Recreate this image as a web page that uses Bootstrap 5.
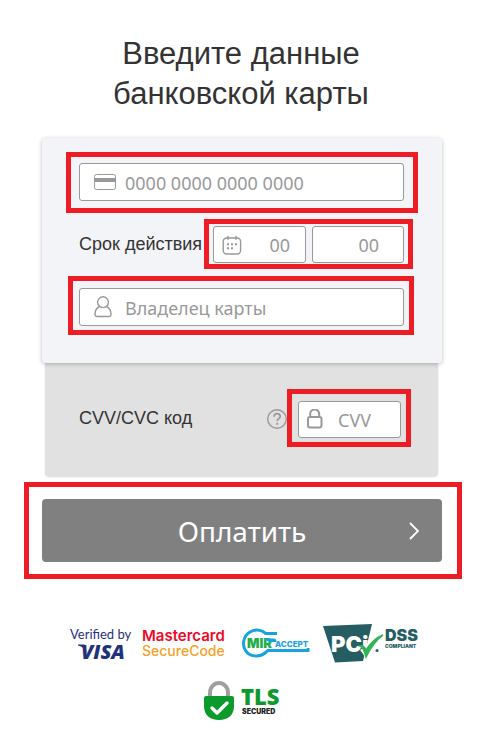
<!DOCTYPE html>
<html lang="ru">
<head>
<meta charset="utf-8">
<meta name="viewport" content="width=device-width, initial-scale=1">
<title>Оплата картой</title>
<link href="https://cdn.jsdelivr.net/npm/bootstrap@5.3.0/dist/css/bootstrap.min.css" rel="stylesheet">
<style>
body { font-family: "Liberation Sans", Arial, sans-serif; color: #333; background: #fff; }
.page { max-width: 520px; padding: 34px 29px 8px 24px; }
.page-title { font-size: 31px; line-height: 40px; margin-bottom: 24px; padding-right: 4px; }
.front { background: #f3f4f7; border-radius: 4px; box-shadow: 0 1px 4px rgba(0,0,0,.25); margin: 0 20px 0 18px; padding: 14px 24px 28px; }
.back { background: #e1e1e1; border-radius: 0 0 4px 4px; box-shadow: 0 1px 2px rgba(0,0,0,.15); margin: 0 24px 0 21px; padding: 26px 27px 29px 34px; }
.frame { border: 5px solid #ee1c25; }
.frame-number { padding: 6px 9px 7px 8px; margin-bottom: 6px; }
.frame-date { padding: 2px 4px 1px; gap: 6px; margin-right: 5px; }
.frame-owner { padding: 7px 5px 4px 6px; margin: 7px 4px 0 2px; }
.frame-cvv { padding: 7px 5px 4px 6px; }
.frame-pay { padding: 12px 15px 12px 13px; margin-top: 6px; }
.field { background: #fff; border: 1px solid #999; border-radius: 3px; height: 38px; }
.field-short { height: 37px; }
.field-wide { padding-left: 14px; }
.field input { font: 18px/24px "Noto Sans", "Open Sans", sans-serif; color: #555; background: none; border: 0; outline: 0; padding: 2px 0 0; min-width: 0; }
.field input::placeholder { color: #999; opacity: 1; }
.field:focus-within { border-color: #555; }
.field-wide input { padding-left: 8px; }
.field-short input { padding-top: 0; }
.field-month { width: 93px; padding: 0 15px 0 8px; }
.field-year { width: 92px; padding: 0 24px 0 8px; }
.field-cvv { width: 103px; padding-left: 7px; }
.field-cvv input { padding-left: 14px; }
.field-label { font-size: 18px; line-height: 24px; }
.date-label { padding-left: 13px; }
.help { color: #999; line-height: 0; }
.pay { background: #808080; color: #fff; border-radius: 4px; height: 63px; padding: 0 22px 0 34px; font: 28px/40px "Noto Sans", "Open Sans", sans-serif; }
.pay:hover { background: #707070; color: #fff; }
.logos { margin-top: 43px; padding-left: 44px; gap: 8px; }
.tls { margin-top: 14px; }
svg { flex: none; display: block; }
.face-wide { font-family: "Inter", sans-serif; }
.face-plain { font-family: "Open Sans", sans-serif; }
</style>
<script src="https://cdn.jsdelivr.net/npm/bootstrap@5.3.0/dist/js/bootstrap.bundle.min.js"></script>
</head>
<body>
<main class="page mx-auto">
  <h1 class="page-title fw-normal text-center">Введите данные<br>банковской карты</h1>
  <form>
    <section class="front position-relative">
      <div class="frame frame-number">
        <div class="field field-wide d-flex align-items-center">
          <svg width="23" height="16" viewBox="0 0 23 16" aria-hidden="true"><rect x=".5" y=".5" width="21" height="15" rx="2" fill="none" stroke="#999"/><rect x="1" y="4" width="20" height="4" fill="#999"/></svg>
          <input class="flex-grow-1" type="text" inputmode="numeric" placeholder="0000 0000 0000 0000" aria-label="Номер карты">
        </div>
      </div>
      <div class="d-flex align-items-center justify-content-between">
        <label class="field-label date-label" for="month">Срок действия</label>
        <div class="frame frame-date d-flex">
          <div class="field field-short field-month d-flex align-items-center">
            <svg width="20" height="20" viewBox="0 0 20 20" fill="none" stroke="#999" stroke-width="1.4" aria-hidden="true"><rect x="1.2" y="3" width="17.4" height="16" rx="3.5"/><path d="M6 .8v4M14 .8v4"/><path d="M5 9.3h2M9 9.3h2M13 9.3h2M5 13.3h2M9 13.3h2" stroke-width="2"/></svg>
            <input class="flex-grow-1 w-100 text-end" id="month" type="text" inputmode="numeric" placeholder="00">
          </div>
          <div class="field field-short field-year d-flex align-items-center">
            <input class="w-100 text-end" type="text" inputmode="numeric" placeholder="00" aria-label="Год">
          </div>
        </div>
      </div>
      <div class="frame frame-owner">
        <div class="field field-wide d-flex align-items-center">
          <svg width="23" height="22" viewBox="0 0 23 22" fill="none" stroke="#999" stroke-width="1.4" aria-hidden="true"><circle cx="9" cy="6.2" r="5.4"/><path d="M5.500 10.500C2.500 12 1 15 1 18.200c0 1.400 1 2.300 2.300 2.300h11.400c1.300 0 2.300-.9 2.300-2.300 0-3.200-1.500-6.200-4.500-7.700"/></svg>
          <input class="flex-grow-1" type="text" placeholder="Владелец карты" aria-label="Владелец карты">
        </div>
      </div>
    </section>
    <section class="back d-flex align-items-center">
      <label class="field-label me-auto" for="cvv">CVV/CVC код</label>
      <button class="help btn p-0 border-0" type="button" aria-label="Что такое CVV">
        <svg width="20" height="22" viewBox="0 0 20 22" fill="none" stroke="#999" stroke-width="1.4"><circle cx="10" cy="12" r="9.300"/><path d="M7 9.800c0-4.300 6.200-3.900 6.200-.4 0 2.200-3 2.300-3 4.700M10.200 15.700v2" stroke-width="1.700"/></svg>
      </button>
      <div class="frame frame-cvv">
        <div class="field field-short field-cvv d-flex align-items-center">
          <svg width="18" height="22" viewBox="0 0 18 22" fill="none" stroke="#999" stroke-width="2" aria-hidden="true"><rect x="2" y="8" width="13.500" height="10.500" rx="2"/><path d="M4.200 8V5a4.500 4.500 0 0 1 9 0v3"/></svg>
          <input class="flex-grow-1 w-100" id="cvv" type="text" inputmode="numeric" placeholder="CVV">
        </div>
      </div>
    </section>
    <div class="frame frame-pay">
      <button class="pay btn border-0 w-100 d-flex align-items-center" type="submit">
        <span class="flex-grow-1 text-center">Оплатить</span>
        <svg width="12" height="18" viewBox="0 0 12 18" fill="none" stroke="#fff" stroke-width="1.800" aria-hidden="true"><path d="M2 1l8 8-8 8"/></svg>
      </button>
    </div>
  </form>
  <div class="logos d-flex">
    <svg width="66" height="42" viewBox="0 0 66 42" role="img" aria-label="Verified by VISA" fill="#1f327e">
      <text x="2" y="17" font-family="Lato" font-size="13">Verified by</text>
      <text class="face-plain" x="13" y="37" font-size="20" font-weight="800" font-style="italic">VISA</text>
      <path d="M10 22.500h6.500l2.500 9c-1.500-4-4.500-7-9-8z"/>
    </svg>
    <svg class="face-wide" width="86" height="42" viewBox="0 0 86 42" role="img" aria-label="Mastercard SecureCode">
      <text x="0" y="19" font-size="15" fill="#eb0a29" font-weight="600">Mastercard</text>
      <text x="0" y="34" font-size="14" fill="#f4a12a" font-weight="500">SecureCode</text>
    </svg>
    <svg width="76" height="42" viewBox="0 0 76 42" role="img" aria-label="MIR Accept">
      <path d="M41 11.500H29.500C26 7.500 19 7 14 10 7 14 6 23 9.500 28.500c4 6.500 14 7 19.500 2.500l3-2.500h40V26" fill="none" stroke="#17a3e0" stroke-width="3"/>
      <text class="face-wide" x="11" y="26" font-size="13" font-weight="900" fill="#22ad4a">MIR</text>
      <path d="M29 16.500h9q2.500 0 2.500 3.500h-5.500q-4 0-6-3.500z" fill="#17a3e0"/>
      <text class="face-wide" x="39" y="25" font-size="8" font-weight="800" fill="#17a3e0">ACCEPT</text>
    </svg>
    <svg width="100" height="42" viewBox="0 0 100 42" role="img" aria-label="PCI DSS Compliant">
      <path d="M3 4l49-2-9 37-28 1.500z" fill="#255d63"/>
      <path d="M43 26l5 7 14-20" fill="none" stroke="#fff" stroke-width="7"/>
      <text class="face-wide" x="11" y="30" font-size="22" font-weight="900" fill="#fff">PCi</text>
      <path d="M40 24c3 1 4.500 5 6 11C50 27 55 19 63 13c-7 2-13 9-17 15-1-2-3-5-6-4z" fill="#31b457" stroke="#31b457" stroke-width="1.500"/>
      <circle cx="57" cy="28.500" r="1.500" fill="#255d63"/>
      <text class="face-wide" x="65" y="19" font-size="16" font-weight="900" fill="#255d63">DSS</text>
      <text class="face-wide" x="65" y="26" font-size="5" font-weight="900" fill="#255d63">COMPLIANT</text>
    </svg>
  </div>
  <div class="tls d-flex justify-content-center">
    <svg width="78" height="44" viewBox="0 0 78 44" role="img" aria-label="TLS Secured">
      <path d="M6 20v-5.500a9 9.500 0 0 1 18 0V20" fill="none" stroke="#a0a0a0" stroke-width="4"/>
      <path d="M2 18h26q2 0 2 2v8c0 9-6 14-15 14S0 37 0 28v-8q0-2 2-2z" fill="#0b9a2b"/>
      <path d="M8 30l5 5 10-10" fill="none" stroke="#fff" stroke-width="3.400" stroke-linecap="round" stroke-linejoin="round"/>
      <text class="face-plain" x="37" y="27" font-size="22" font-weight="800" fill="#0b9a2b">TLS</text>
      <text class="face-wide" x="38" y="36" font-size="7" font-weight="900" fill="#222">SECURED</text>
    </svg>
  </div>
</main>
</body>
</html>
